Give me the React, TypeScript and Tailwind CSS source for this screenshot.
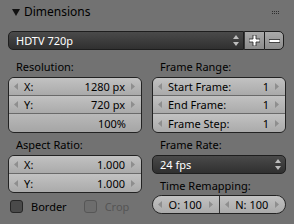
import React from "react";

const font = { fontFamily: '"Noto Sans", "Open Sans", sans-serif' };

function ArrowL() {
  return (
    <svg width="4" height="7" viewBox="0 0 4 7" className="shrink-0">
      <path d="M4 0 L0 3.5 L4 7 Z" fill="#8e8e8e" />
    </svg>
  );
}
function ArrowR() {
  return (
    <svg width="4" height="7" viewBox="0 0 4 7" className="shrink-0">
      <path d="M0 0 L4 3.5 L0 7 Z" fill="#8e8e8e" />
    </svg>
  );
}

function NumRow({ label, value, last }: { label: string; value: string; last?: boolean }) {
  return (
    <div
      className={
        "h-[18px] flex items-center pl-[5px] pr-[6px] bg-gradient-to-b from-[#c2c2c2] to-[#aaaaaa] " +
        (last ? "" : "border-b border-[#6a6a6a]")
      }
    >
      <ArrowL />
      <span className="ml-[6px] text-black">{label}</span>
      <span className="ml-auto mr-[6px] text-black">{value}</span>
      <ArrowR />
    </div>
  );
}

function Label({ text, cls }: { text: string; cls: string }) {
  return <div className={"flex items-center pl-[8px] text-black " + cls}>{text}</div>;
}

function Menu({ text, right }: { text: string; right?: boolean }) {
  return (
    <div
      className={
        "h-[19px] flex items-center pl-[7px] pr-[4px] text-white bg-gradient-to-b from-[#4a4a4a] to-[#303030] border border-[#1e1e1e] " +
        (right ? "rounded-l-[5px] flex-1" : "rounded-[5px]")
      }
    >
      <span>{text}</span>
      <svg width="6" height="11" viewBox="0 0 6 11" className="ml-auto">
        <path d="M0 4 L3 0 L6 4 Z" fill="#bdbdbd" />
        <path d="M0 7 L3 11 L6 7 Z" fill="#bdbdbd" />
      </svg>
    </div>
  );
}

function CheckBox({ label, disabled }: { label: string; disabled?: boolean }) {
  return (
    <div className="flex items-center">
      <div
        className={
          "w-[13px] h-[13px] rounded-[3px] border " +
          (disabled ? "bg-[#6d6d6d] border-[#565656]" : "bg-[#4a4a4a] border-[#262626]")
        }
      />
      <span className={"ml-[8px] " + (disabled ? "text-[#555555]" : "text-black")}>{label}</span>
    </div>
  );
}

export default function App() {
  return (
    <div className="w-[294px] h-[224px] bg-[#727272] text-[11px] leading-none overflow-hidden" style={font}>
      {/* header */}
      <div className="h-[24px] flex items-center pl-[12px] pr-[15px]">
        <svg width="8" height="7" viewBox="0 0 8 7">
          <path d="M0 0 L8 0 L4 7 Z" fill="#111" />
        </svg>
        <span className="ml-[4px] text-[12px] text-black">Dimensions</span>
        <div className="ml-auto grid grid-cols-4 gap-x-[1px] gap-y-[1px]">
          {Array.from({ length: 8 }).map((_, i) => (
            <div key={i} className="w-[1px] h-[1px] bg-[#2e2e2e]" />
          ))}
        </div>
      </div>

      {/* preset row */}
      <div className="mt-[7px] pl-[8px] pr-[10px] flex">
        <Menu text="HDTV 720p" right />
        <div className="w-[20px] h-[19px] flex items-center justify-center bg-gradient-to-b from-[#aaaaaa] to-[#8c8c8c] border-y border-[#1e1e1e] border-l border-l-[#3a3a3a]">
          <svg width="11" height="11" viewBox="0 0 11 11">
            <path d="M4 0 H7 V4 H11 V7 H7 V11 H4 V7 H0 V4 H4 Z" fill="#ffffff" stroke="#222" strokeWidth="0.8" />
          </svg>
        </div>
        <div className="w-[20px] h-[19px] flex items-center justify-center bg-gradient-to-b from-[#aaaaaa] to-[#8c8c8c] border border-[#1e1e1e] rounded-r-[5px]">
          <svg width="11" height="4" viewBox="0 0 11 4">
            <path d="M0 0.5 H11 V3.5 H0 Z" fill="#ffffff" stroke="#222" strokeWidth="0.8" />
          </svg>
        </div>
      </div>

      <div className="mt-[7px] px-[8px] grid grid-cols-2 gap-x-[10px]">
        {/* left col */}
        <div className="flex flex-col">
          <Label text="Resolution:" cls="h-[20px] pb-[1px]" />
          <div className="rounded-[6px] border border-[#222] overflow-hidden">
            <NumRow label="X:" value="1280 px" />
            <NumRow label="Y:" value="720 px" />
            <div className="h-[18px] flex items-center justify-end pr-[15px] bg-gradient-to-b from-[#b9b9b9] to-[#a5a5a5] text-black">
              100%
            </div>
          </div>
          <Label text="Aspect Ratio:" cls="h-[22px]" />
          <div className="rounded-[6px] border border-[#222] overflow-hidden">
            <NumRow label="X:" value="1.000" />
            <NumRow label="Y:" value="1.000" last />
          </div>
          <div className="mt-[7px] pl-[2px] flex items-center gap-[17px]">
            <CheckBox label="Border" />
            <CheckBox label="Crop" disabled />
          </div>
        </div>

        {/* right col */}
        <div className="flex flex-col">
          <Label text="Frame Range:" cls="h-[20px] pb-[1px]" />
          <div className="rounded-[6px] border border-[#222] overflow-hidden">
            <NumRow label="Start Frame:" value="1" />
            <NumRow label="End Frame:" value="1" />
            <NumRow label="Frame Step:" value="1" last />
          </div>
          <Label text="Frame Rate:" cls="h-[22px]" />
          <Menu text="24 fps" />
          <Label text="Time Remapping:" cls="h-[21px] pt-[2px]" />
          <div className="h-[19px] rounded-full border border-[#222] overflow-hidden flex">
            <div className="flex-1 flex items-center pl-[5px] pr-[6px] bg-gradient-to-b from-[#c2c2c2] to-[#aaaaaa] border-r border-[#333]">
              <ArrowL />
              <span className="flex-1 text-center text-black">O: 100</span>
              <ArrowR />
            </div>
            <div className="flex-1 flex items-center pl-[5px] pr-[6px] bg-gradient-to-b from-[#c2c2c2] to-[#aaaaaa]">
              <ArrowL />
              <span className="flex-1 text-center text-black">N: 100</span>
              <ArrowR />
            </div>
          </div>
        </div>
      </div>
    </div>
  );
}
